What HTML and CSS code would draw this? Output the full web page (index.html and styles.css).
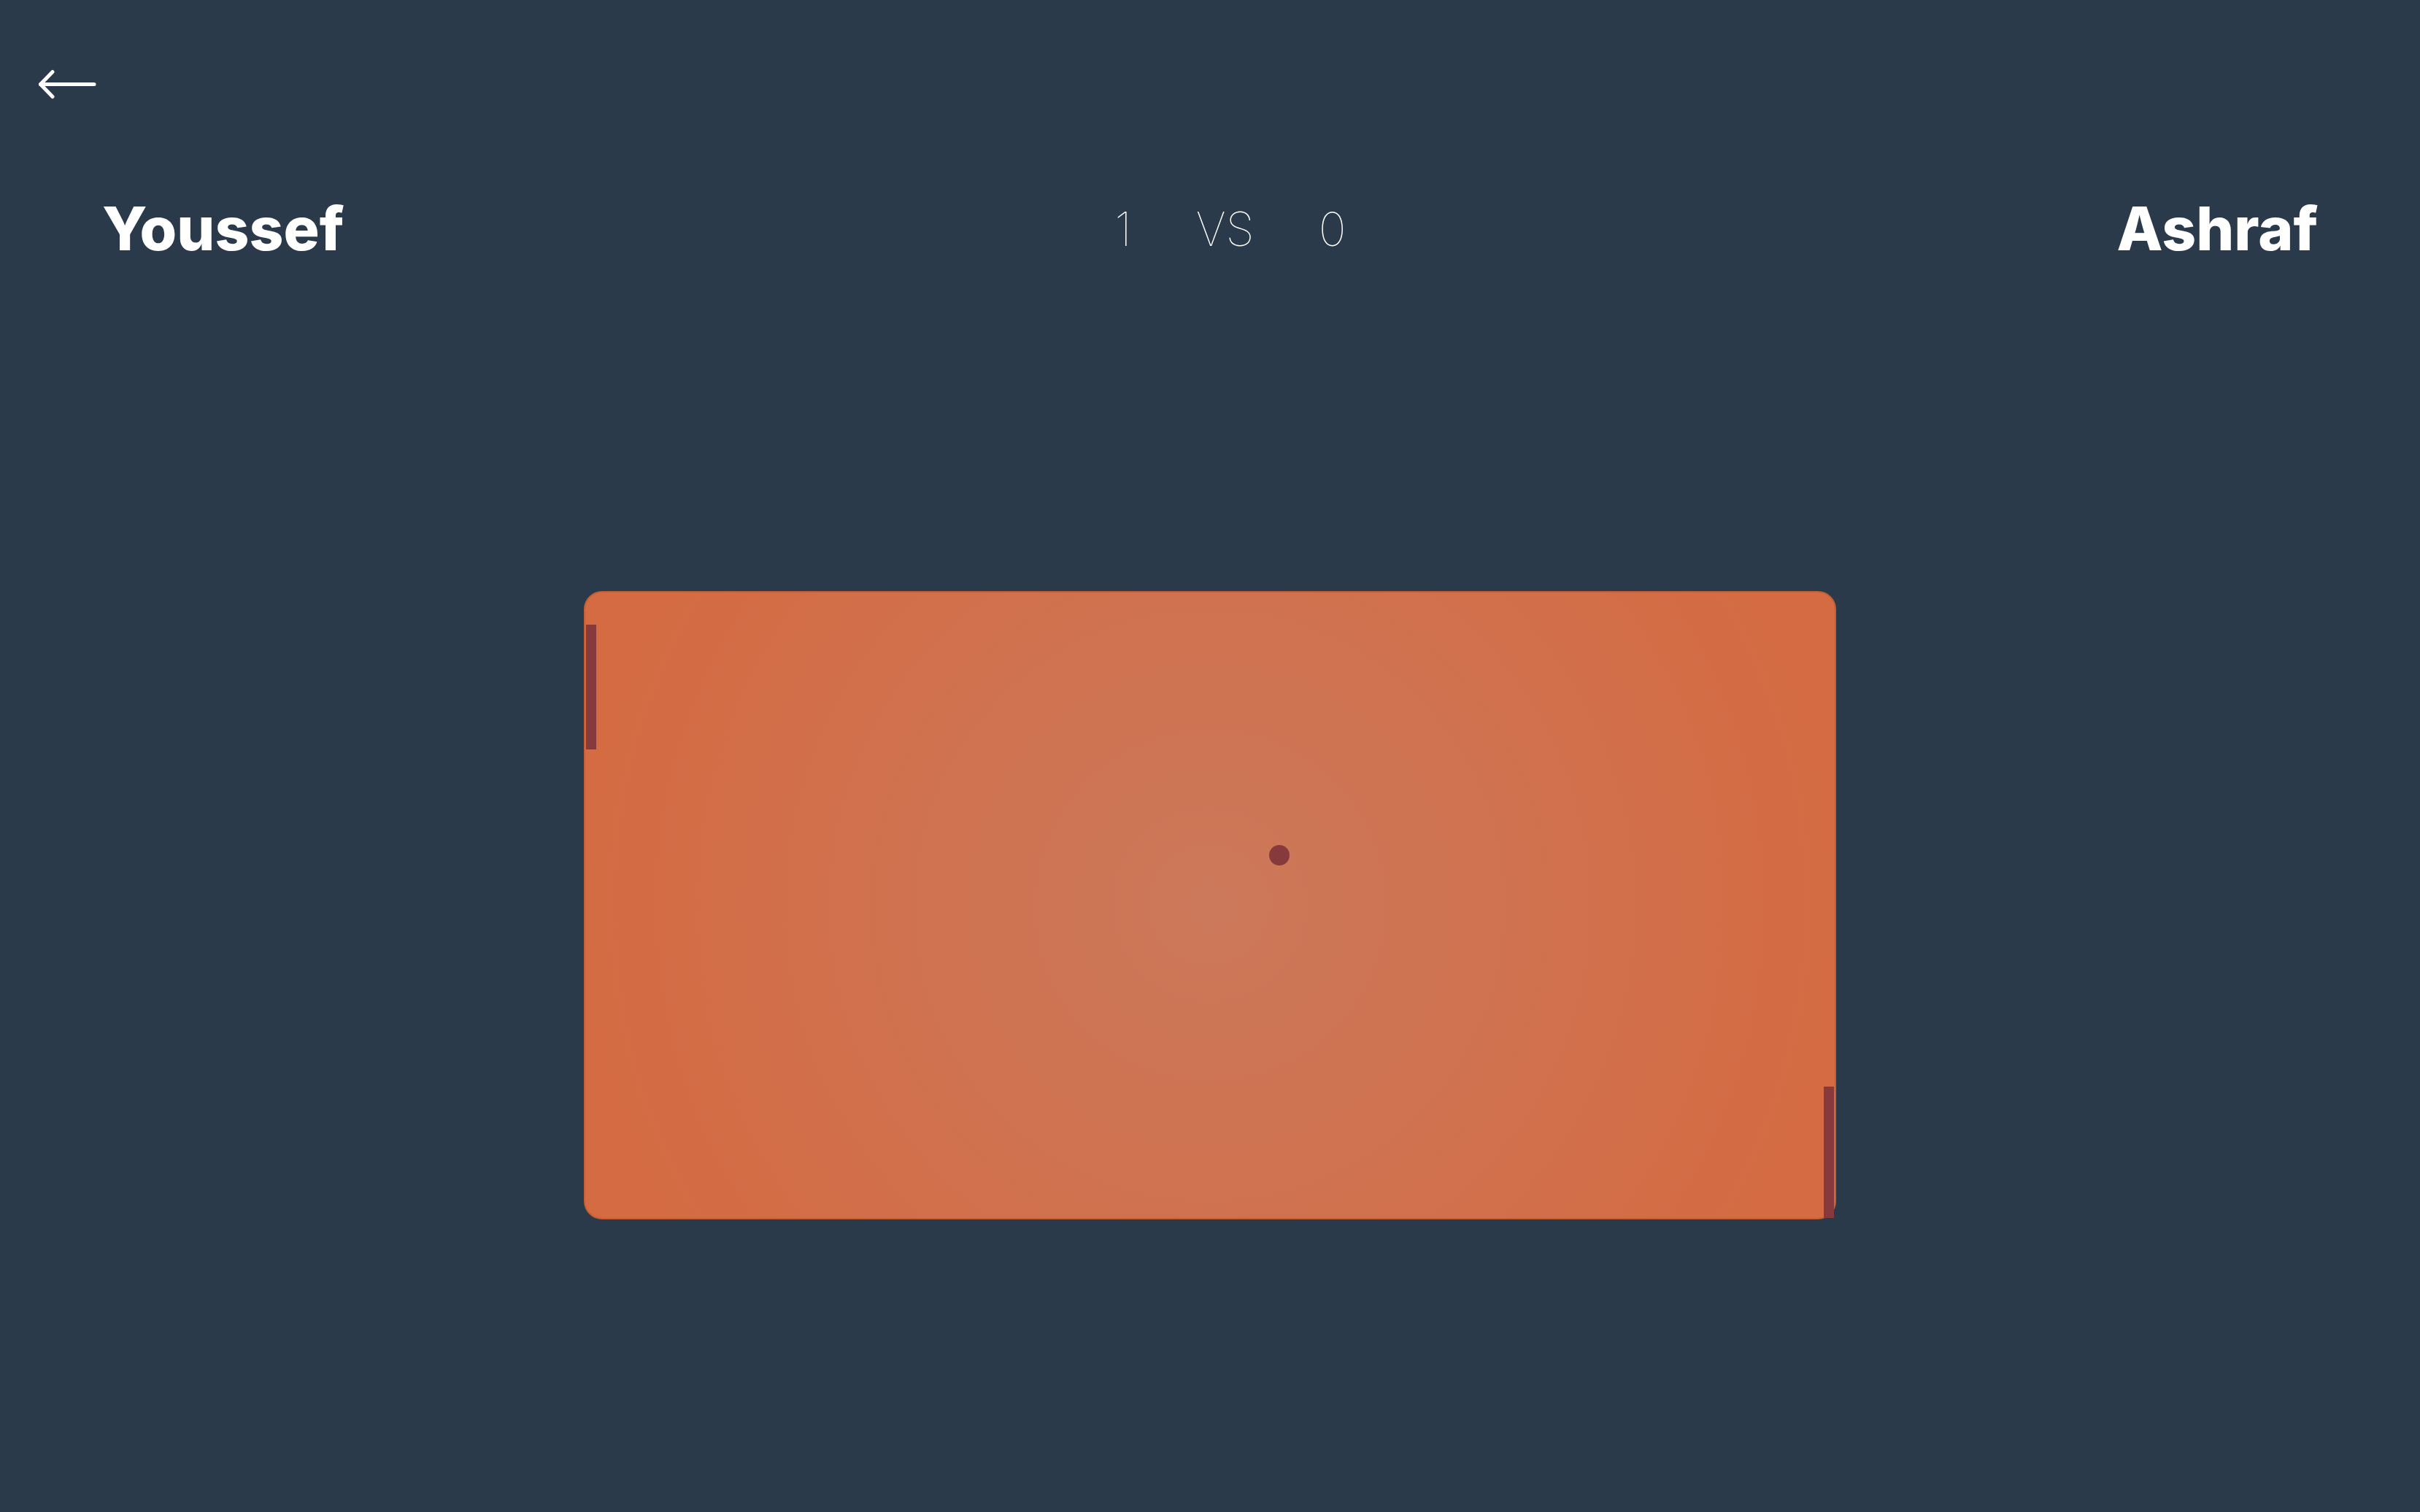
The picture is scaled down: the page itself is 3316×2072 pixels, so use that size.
FILE: index.html
```html
<!DOCTYPE html>
<html lang="en">
<head>
<meta charset="utf-8">
<title>Pong</title>
<link rel="stylesheet" href="styles.css">
</head>
<body>
<div class="page">
  <div class="topbar">
    <a class="back" href="#" aria-label="Back">
      <svg width="84" height="42" viewBox="0 0 84 42" fill="none" stroke="#ffffff" stroke-width="5" stroke-linecap="round" stroke-linejoin="round">
        <path d="M5.5 20.5 H79"/>
        <path d="M22 3.5 L5.5 20.5 L22 37.5"/>
      </svg>
    </a>
  </div>
  <header class="scoreboard">
    <div class="player">Youssef</div>
    <div class="score">
      <span class="num">1</span>
      <span class="vs">VS</span>
      <span class="num">0</span>
    </div>
    <div class="player">Ashraf</div>
  </header>
  <main class="arena">
    <div class="board">
      <div class="paddle paddle-left"></div>
      <div class="ball"></div>
      <div class="paddle paddle-right"></div>
    </div>
  </main>
</div>
</body>
</html>
```

FILE: styles.css
```css
html, body {
  margin: 0;
  padding: 0;
}

body {
  background: #2b3a4a;
  width: 3316px;
  height: 2072px;
  overflow: hidden;
  font-family: "Inter", "Noto Sans", sans-serif;
  color: #ffffff;
}

.page {
  display: flex;
  flex-direction: column;
}

.topbar {
  padding: 95px 0 0 50px;
  height: 42px;
}

.back {
  display: block;
  width: 84px;
  height: 42px;
}

.back svg {
  display: block;
}

.scoreboard {
  margin-top: 137px;
  padding: 0 140px;
  display: flex;
  justify-content: space-between;
  align-items: center;
  height: 80px;
}

.player {
  font-size: 82px;
  font-weight: 800;
  line-height: 1;
  letter-spacing: 0;
}

.score {
  display: flex;
  align-items: center;
  gap: 88px;
  font-size: 64px;
  font-weight: 100;
  line-height: 1;
}

.arena {
  margin-top: 456px;
  display: flex;
  justify-content: center;
}

.board {
  position: relative;
  width: 1716px;
  height: 861px;
  box-sizing: border-box;
  border: 2px solid #c65f31;
  border-radius: 25px;
  background: radial-gradient(circle 860px at center, #cc795b 0%, #cf7351 40%, #d46b43 100%);
}

.paddle {
  position: absolute;
  width: 14px;
  background: #863a3b;
}

.paddle-left {
  left: 1px;
  top: 44px;
  height: 171px;
}

.paddle-right {
  right: 1px;
  top: 677px;
  height: 180px;
}

.ball {
  position: absolute;
  left: 937px;
  top: 346px;
  width: 28px;
  height: 28px;
  border-radius: 50%;
  background: #863a3b;
}
```
